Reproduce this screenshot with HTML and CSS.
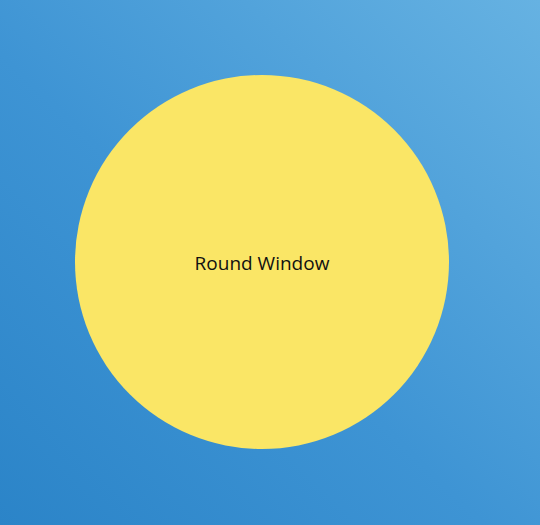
FILE: index.html
```html
<!DOCTYPE html>
<html>
<head>
<meta charset="utf-8">
<link rel="stylesheet" href="styles.css">
</head>
<body>
<div class="desktop">
  <div class="round-window">
    <span class="label">Round Window</span>
  </div>
</div>
</body>
</html>
```
FILE: styles.css
```css
html, body {
  margin: 0;
  padding: 0;
}
.desktop {
  width: 540px;
  height: 525px;
  box-sizing: border-box;
  padding: 75px 0 0 75px;
  background: linear-gradient(to top right, #2b84c8 0%, #3e94d4 45%, #66b2e2 100%);
  overflow: hidden;
}
.round-window {
  width: 374px;
  height: 374px;
  border-radius: 50%;
  background: #fae666;
  display: flex;
  align-items: center;
  justify-content: center;
}
.label {
  font-family: "Open Sans", "Noto Sans", sans-serif;
  font-size: 19px;
  color: #111;
  margin-top: 2px;
}
```
